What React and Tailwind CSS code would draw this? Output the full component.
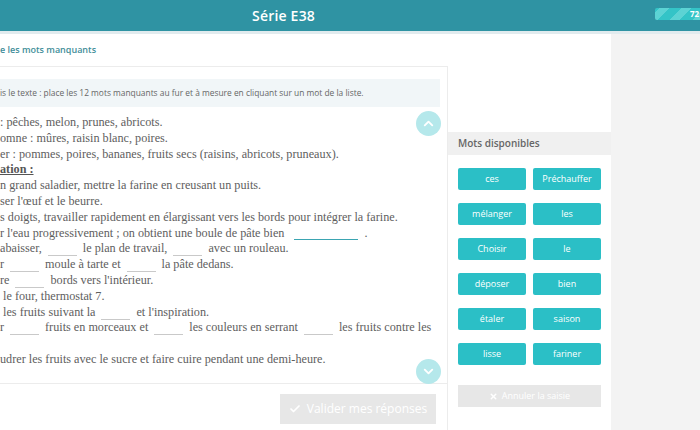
import React from "react";
import { ChevronUp, ChevronDown, Check, X } from "lucide-react";

const WORDS = [
  "ces", "Préchauffer",
  "mélanger", "les",
  "Choisir", "le",
  "déposer", "bien",
  "étaler", "saison",
  "lisse", "fariner",
];

function Blank({ wide }) {
  if (wide) {
    return (
      <span className="inline-block w-[64px] ml-[10px] mr-[6px] border-b-[1.5px] border-[#3ba5b2] translate-y-[3px]"></span>
    );
  }
  return (
    <span className="inline-block w-[29px] mx-[6px] border-b border-[#c9c9c9] translate-y-[4px]"></span>
  );
}

export default function App() {
  return (
    <div className="w-[700px] h-[430px] overflow-hidden bg-[#f3f3f3] font-['Open_Sans',sans-serif]">
      {/* Header */}
      <div className="relative h-[34px] bg-[#2f93a3] border-b-[3px] border-[#e1ebee] flex items-center">
        <h1 className="absolute left-[252px] top-[5px] text-[14px] font-semibold text-white tracking-[0.2px]">
          Série E38
        </h1>
        <div className="absolute left-[655px] top-[8px] w-[60px] h-[12px] rounded-[2px] bg-[repeating-linear-gradient(-45deg,#34c4c7_0px,#34c4c7_9px,#5cd3d4_9px,#5cd3d4_16px)] flex items-center pl-[35px]">
          <span className="text-[8px] font-bold text-white leading-none">72</span>
        </div>
      </div>

      <div className="flex">
        {/* Main card */}
        <div className="w-[611px] h-[396px] bg-white flex flex-col">
          <div className="h-[32px] flex items-center">
            <span className="text-[9px] font-semibold text-[#3f8e99]">e les mots manquants</span>
          </div>

          <div className="flex flex-1">
            {/* Left column */}
            <div className="w-[447px] border-t border-[#ececec] flex flex-col">
              <div className="mt-[12px] w-[440px] h-[28px] bg-[#f1f6f8] flex items-center">
                <span className="text-[8.4px] text-[#666]">
                  is le texte : place les 12 mots manquants au fur et à mesure en cliquant sur un mot de la liste.
                </span>
              </div>

              <div className="relative h-[276px] font-['Liberation_Serif',serif] text-[12.2px] leading-[15.8px] text-[#5e5e5e] pt-[8px] whitespace-nowrap">
                <p>: pêches, melon, prunes, abricots.</p>
                <p>omne : mûres, raisin blanc, poires.</p>
                <p>er : pommes, poires, bananes, fruits secs (raisins, abricots, pruneaux).</p>
                <p className="font-bold underline text-[#555]">ation :</p>
                <p>n grand saladier, mettre la farine en creusant un puits.</p>
                <p>ser l'œuf et le beurre.</p>
                <p>s doigts, travailler rapidement en élargissant vers les bords pour intégrer la farine.</p>
                <p>
                  r l'eau progressivement ; on obtient une boule de pâte bien<Blank wide />.
                </p>
                <p>
                  abaisser,<Blank />le plan de travail,<Blank />avec un rouleau.
                </p>
                <p>
                  r<Blank />moule à tarte et<Blank />la pâte dedans.
                </p>
                <p>
                  re<Blank />bords vers l'intérieur.
                </p>
                <p>&nbsp;le four, thermostat 7.</p>
                <p>
                  &nbsp;les fruits suivant la<Blank />et l'inspiration.
                </p>
                <p>
                  r<Blank />fruits en morceaux et<Blank />les couleurs en serrant<Blank />les fruits contre les
                </p>
                <p>&nbsp;</p>
                <p>udrer les fruits avec le sucre et faire cuire pendant une demi-heure.</p>

                <button className="absolute left-[416px] top-[4px] w-[25px] h-[25px] rounded-full bg-[#b5e8eb] flex items-center justify-center">
                  <ChevronUp size={15} strokeWidth={3} color="#ffffff" />
                </button>
                <button className="absolute left-[416px] top-[252px] w-[25px] h-[25px] rounded-full bg-[#b5e8eb] flex items-center justify-center">
                  <ChevronDown size={15} strokeWidth={3} color="#ffffff" />
                </button>
              </div>

              <div className="border-t border-[#ececec] flex justify-end pr-[11px] pt-[10px]">
                <button className="w-[156px] h-[30px] bg-[#e7e7e7] flex items-center justify-center gap-[6px] text-white text-[12px]">
                  <Check size={12} strokeWidth={3.5} />
                  <span>Valider mes réponses</span>
                </button>
              </div>
            </div>

            {/* Right column */}
            <div className="flex-1 border-l border-[#ececec] flex flex-col">
              <div className="h-[66px]"></div>
              <div className="h-[23px] bg-[#f0f0f0] flex items-center pl-[10px]">
                <span className="text-[10px] font-semibold text-[#666]">Mots disponibles</span>
              </div>
              <div className="ml-[10px] mt-[13px] grid grid-cols-[68px_68px] gap-x-[7px] gap-y-[13px]">
                {WORDS.map((w) => (
                  <button
                    key={w}
                    className="h-[22px] rounded-[2px] bg-[#2bbfc6] text-white text-[9px] flex items-center justify-center"
                  >
                    {w}
                  </button>
                ))}
              </div>
              <button className="ml-[10px] mt-[20px] w-[143px] h-[22px] bg-[#e7e7e7] flex items-center justify-center gap-[4px] text-white text-[9px]">
                <X size={9} strokeWidth={4} />
                <span>Annuler la saisie</span>
              </button>
            </div>
          </div>
        </div>
      </div>
    </div>
  );
}
